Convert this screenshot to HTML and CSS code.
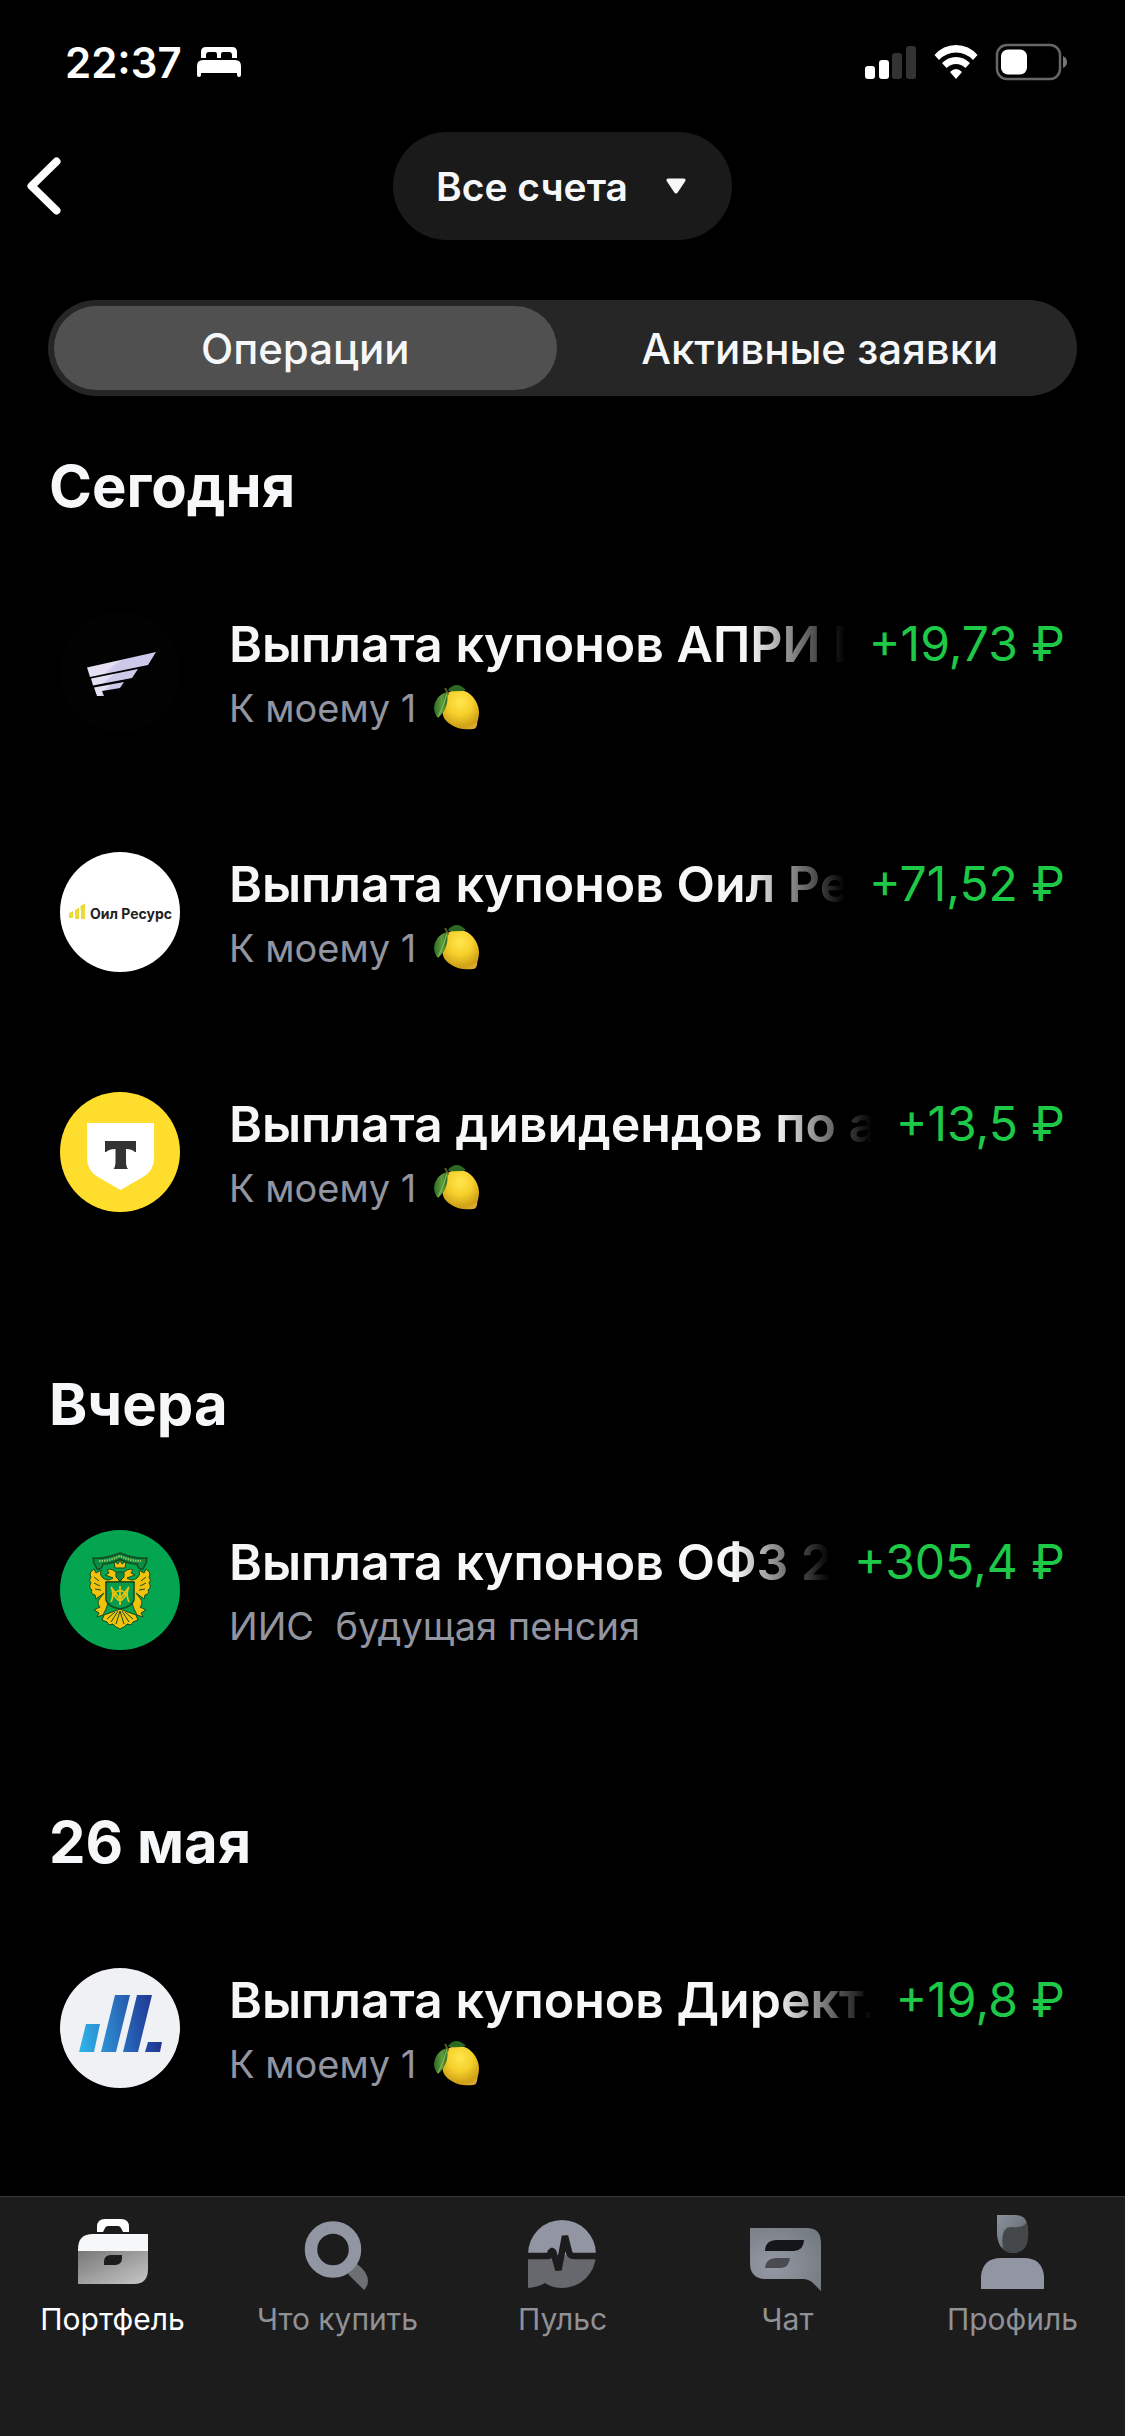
FILE: index.html
```html
<!DOCTYPE html>
<html lang="ru">
<head>
<meta charset="utf-8">
<meta name="viewport" content="width=device-width, initial-scale=1">
<title>Операции</title>
<link rel="stylesheet" href="styles.css">
</head>
<body>
<svg class="defs" aria-hidden="true">
  <defs>
    <radialGradient id="lemon-fill" cx=".48" cy=".3" r=".75">
      <stop offset="0" stop-color="#ffe64e"/><stop offset=".45" stop-color="#f6d02c"/><stop offset=".85" stop-color="#d0a116"/><stop offset="1" stop-color="#dca93a"/>
    </radialGradient>
    <linearGradient id="leaf-fill" x1="0" y1="0" x2="1" y2="0">
      <stop offset="0" stop-color="#2c6b2a"/><stop offset=".6" stop-color="#5f9c3c"/><stop offset="1" stop-color="#2f6a24"/>
    </linearGradient>
    <symbol id="lemon" viewBox="0 0 48 48">
      <path d="M14 10C18 5 28 5 34 8C42 13 46 21 46 29C46 34 44 37 44 41Q43 45 40 45C32 46 24 45 17 40C11 36 9 31 10 27C12 20 12 14 14 10Z" fill="url(#lemon-fill)"/>
      <path d="M12 4Q14 7 15 11" stroke="#5d5a24" stroke-width="2" fill="none"/>
      <path d="M15 6Q23-4 33 6Q25 8 16 7Z" fill="#2c6a22"/>
      <path d="M14 8C6 10 1 17 1 25Q2 31 5 34C12 28 16 19 14 8Z" fill="url(#leaf-fill)"/>
      <path d="M14 9Q11 22 5 33" stroke="#8fc25c" stroke-width="1" fill="none"/>
    </symbol>
  </defs>
</svg>

<header class="top">
  <div class="status">
    <div class="status-left">
      <time class="clock">22:37</time>
      <svg class="bed" viewBox="0 0 46 32" aria-label="Сон" role="img">
        <path d="M5 12V6Q5 1 10 1H36Q41 1 41 6V12H36V9Q36 6 33 6H27Q25 6 25 8V12H21V8Q21 6 19 6H13Q10 6 10 9V12Z" fill="#fff"/>
        <path d="M1 29V20Q1 14 7 14H39Q45 14 45 20V29Q45 31 43 31T41 29V27H5V29Q5 31 3 31T1 29Z" fill="#fff"/>
      </svg>
    </div>
    <div class="status-right">
      <svg class="signal" viewBox="0 0 52 36" role="img" aria-label="Сигнал">
        <rect x="0" y="22" width="10" height="13" rx="3" fill="#fff"/>
        <rect x="14" y="16" width="10" height="19" rx="3" fill="#fff"/>
        <rect x="27" y="9" width="10" height="26" rx="3" fill="#333"/>
        <rect x="41" y="2" width="10" height="33" rx="3" fill="#333"/>
      </svg>
      <svg class="wifi" viewBox="0 0 44 36" role="img" aria-label="Wi-Fi">
        <path d="M0.500 11Q9 1 22 1T43.500 11L39 16Q32 8.500 22 8.500T5 16Z" fill="#fff"/>
        <path d="M8 19Q14 13 22 13T36 19L31.500 24Q27 20 22 20T12.500 24Z" fill="#fff"/>
        <path d="M16 28Q19 25 22 25T28 28L22 35Z" fill="#fff"/>
      </svg>
      <svg class="battery" viewBox="0 0 74 38" role="img" aria-label="Батарея">
        <rect x="2" y="2" width="63" height="34" rx="10" fill="none" stroke="#666" stroke-width="2.500"/>
        <rect x="6" y="6.500" width="26" height="25" rx="7" fill="#fff"/>
        <path d="M68 13Q72 15 72 19T68 25Z" fill="#777"/>
      </svg>
    </div>
  </div>
  <div class="navbar">
    <button class="back" type="button" aria-label="Назад">
      <svg class="back-icon" viewBox="0 0 34 58" aria-hidden="true"><path d="M29.500 4.500L4.500 29L29.500 53.500" fill="none" stroke="#fff" stroke-width="8" stroke-linecap="round" stroke-linejoin="round"/></svg>
    </button>
    <button class="account" type="button">Все счета
      <svg class="caret" viewBox="0 0 20 16" aria-hidden="true"><path d="M2 0.500H18Q20.500 1 19 3.500L12 14Q10 17 8 14L1 3.500Q-0.500 1 2 0.500Z" fill="#f6f7f8"/></svg>
    </button>
  </div>
</header>

<div class="tabs" role="tablist">
  <button class="tab tab-active" type="button" role="tab" aria-selected="true">Операции</button>
  <button class="tab" type="button" role="tab" aria-selected="false">Активные заявки</button>
</div>

<main class="feed">
  <section class="day">
    <h2 class="day-title">Сегодня</h2>
    <ul class="ops">
      <li class="op">
        <svg class="logo" viewBox="0 0 120 120" aria-hidden="true">
          <defs><linearGradient id="wing" x1="0" y1="0" x2="1" y2=".4"><stop offset=".5" stop-color="#e6e0f4"/><stop offset=".55" stop-color="#cdc9ea"/></linearGradient></defs>
          <circle cx="60" cy="60" r="60" fill="#020203"/>
          <g fill="url(#wing)"><path d="M27 55.500L96 40L88 53L30 65Z"/><path d="M31 66.500L78 57L72 66L33 73.500Z"/><path d="M34 75.500L64 70L60 76L42 79L44 84H37Z"/></g>
        </svg>
        <div class="op-text">
          <div class="op-line"><span class="op-title">Выплата купонов АПРИ Б</span><span class="op-sum">+19,73 ₽</span></div>
          <div class="op-sub">К моему 1 <svg class="lemon" role="img" aria-label="лимон"><use href="#lemon"/></svg></div>
        </div>
      </li>
      <li class="op">
        <svg class="logo" viewBox="0 0 120 120" aria-hidden="true">
          <circle cx="60" cy="60" r="60" fill="#fff"/>
          <path d="M9 61L13 59V66H9ZM15 58L19 55.500V67H15ZM21 55L25 52V67H21ZM20.500 54L25 51.500V56L20.500 58Z" fill="#eadb36"/>
          <text class="oil-name" x="30" y="67">Оил Ресурс</text>
        </svg>
        <div class="op-text">
          <div class="op-line"><span class="op-title">Выплата купонов Оил Рес</span><span class="op-sum">+71,52 ₽</span></div>
          <div class="op-sub">К моему 1 <svg class="lemon" role="img" aria-label="лимон"><use href="#lemon"/></svg></div>
        </div>
      </li>
      <li class="op">
        <svg class="logo" viewBox="0 0 120 120" aria-hidden="true">
          <circle cx="60" cy="60" r="60" fill="#ffdd2d"/>
          <path d="M27 31H94V66Q94 79 83 85L60.500 98L38 85Q27 79 27 66Z" fill="#fff"/>
          <path d="M45 49H76V60H75Q72 57 66 57V69Q66 75 68 77H53.500Q55.500 75 55.500 69V57Q49 57 46 60H45Z" fill="#333"/>
        </svg>
        <div class="op-text">
          <div class="op-line"><span class="op-title">Выплата дивидендов по ак</span><span class="op-sum">+13,5 ₽</span></div>
          <div class="op-sub">К моему 1 <svg class="lemon" role="img" aria-label="лимон"><use href="#lemon"/></svg></div>
        </div>
      </li>
    </ul>
  </section>

  <section class="day">
    <h2 class="day-title">Вчера</h2>
    <ul class="ops">
      <li class="op">
        <svg class="logo" viewBox="0 0 120 120" aria-hidden="true">
          <circle cx="60" cy="60" r="60" fill="#04a551"/>
          <g stroke="#174a1c" stroke-linejoin="round">
            <path d="M33 28Q46 29 60 23Q74 29 87 28L86 33L83 39Q78 40 77 34Q68 34 60 29Q52 34 43 34Q42 40 37 39L34 33Z" fill="#0b8b43" stroke-width="1.500"/>
            <path d="M39 31Q50 31 60 26Q70 31 81 31" fill="none" stroke="#9cc75f" stroke-width="2" stroke-dasharray="1.500 1"/>
            <g fill="#f0c20c" stroke-width="1">
              <path id="wing-half" d="M59 45Q52 37 47 40L49 43L45 45L53 48Q48 52 43 48Q39 45 41 40L36 43L34 39Q28 43 31 47Q28 50 31 53Q28 57 32 60Q30 64 35 65L36 69L44 63L40 68Q36 73 40 77L34 80L39 83L37 87L43 85L46 79L48 73L46 52H59Z"/>
              <use href="#wing-half" transform="matrix(-1 0 0 1 120 0)"/>
              <path d="M55 38L54 31L58 34L60 30L62 34L66 31L65 38Z"/>
              <path d="M60 79L44 85L42 90L47 92L49 95L53 94L56 97L60 99L64 97L67 94L71 95L73 92L78 90L76 85Z"/>
            </g>
            <path d="M46 52H74V70Q72 77 60 79Q48 77 46 70Z" fill="#069c4b" stroke-width="1.500"/>
            <path d="M51 92Q55 86 58 81M56 94L60 81L64 94M69 92Q65 86 62 81M47 89L55 82M73 89L65 82M34 47L39 51M34 53L40 56M35 59L41 60M86 47L81 51M86 53L80 56M85 59L79 60" fill="none" stroke-width="1"/>
            <path d="M60 56V75M51 57Q55 63 51 72M69 57Q65 63 69 72M51 57L60 69L69 57M60 60Q49 64 60 71Q71 64 60 60" fill="none" stroke="#e5c315" stroke-width="1.800"/>
            <path d="M56 42H64V47L60 51L56 47Z" fill="#0b8b43" stroke-width="1"/>
          </g>
        </svg>
        <div class="op-text">
          <div class="op-line"><span class="op-title">Выплата купонов ОФЗ 26</span><span class="op-sum">+305,4 ₽</span></div>
          <div class="op-sub">ИИС&nbsp; будущая пенсия</div>
        </div>
      </li>
    </ul>
  </section>

  <section class="day">
    <h2 class="day-title">26 мая</h2>
    <ul class="ops">
      <li class="op">
        <svg class="logo" viewBox="0 0 120 120" aria-hidden="true">
          <defs><linearGradient id="bars" gradientUnits="userSpaceOnUse" x1="19" y1="84" x2="102" y2="72"><stop offset="0" stop-color="#2fb6ea"/><stop offset=".45" stop-color="#2b79c4"/><stop offset=".75" stop-color="#2450a8"/><stop offset="1" stop-color="#22348f"/></linearGradient></defs>
          <circle cx="60" cy="60" r="60" fill="#f0f1f4"/>
          <path d="M26 56H40L34 84H19ZM55 27H70L56 84H41ZM77 27H92L78 84H63ZM88 74H102L100 84H85Z" fill="url(#bars)"/>
        </svg>
        <div class="op-text">
          <div class="op-line"><span class="op-title">Выплата купонов ДиректЛ</span><span class="op-sum">+19,8 ₽</span></div>
          <div class="op-sub">К моему 1 <svg class="lemon" role="img" aria-label="лимон"><use href="#lemon"/></svg></div>
        </div>
      </li>
    </ul>
  </section>
</main>

<nav class="bottom">
  <a class="nav-item nav-current" href="#portfolio" aria-current="page">
    <svg class="nav-icon" viewBox="0 0 84 84" aria-hidden="true">
      <defs><linearGradient id="case" x1="0" y1="0" x2="1" y2="1"><stop offset="0" stop-color="#777"/><stop offset="1" stop-color="#c8c8c8"/></linearGradient></defs>
      <path d="M26 22V17Q26 9 34 9H50Q58 9 58 17V22H52L50 18Q49 16 47 16H37Q35 16 34 18L32 22Z" fill="#fff"/>
      <path d="M7 41V39Q7 24 22 24H77V41Z" fill="#f6f7f8"/>
      <path d="M7 41H77V59Q77 74 63 74H7Z" fill="url(#case)"/>
      <path d="M33 55V52Q33 45 40 45H51V48Q51 55 44 55Z" fill="#1c1c1d"/>
    </svg>
    Портфель
  </a>
  <a class="nav-item" href="#buy">
    <svg class="nav-icon" viewBox="0 0 84 84" aria-hidden="true">
      <path d="M61 54Q72 62 72 71Q72 76 68 80L52 64Z" fill="#6d7072"/>
      <circle cx="37" cy="39.500" r="22" fill="none" stroke="#9296a2" stroke-width="12.500"/>
    </svg>
    Что купить
  </a>
  <a class="nav-item" href="#pulse">
    <svg class="nav-icon" viewBox="0 0 84 84" aria-hidden="true">
      <path d="M7 44A34 34 0 0 1 75 44V45H7Z" fill="#9296a2"/>
      <path d="M7 45H75A34 34 0 0 1 41 78Q31 78 24 73Q18 77 7 78Z" fill="#66686d"/>
      <path d="M5 46H27Q29 46 30 41H32L37.500 60L44 26L48 42Q49 46 53 46H78" fill="none" stroke="#1c1c1d" stroke-width="6.500" stroke-linejoin="bevel"/>
    </svg>
    Пульс
  </a>
  <a class="nav-item" href="#chat">
    <svg class="nav-icon" viewBox="0 0 84 84" aria-hidden="true">
      <defs><radialGradient id="bubble" cx=".3" cy=".6" r=".8"><stop offset="0" stop-color="#9499a4"/><stop offset="1" stop-color="#757b82"/></radialGradient></defs>
      <path d="M4 18H61Q75 18 75 33V81L68 74Q63 69 57 69H20Q4 69 4 53Z" fill="url(#bubble)"/>
      <path d="M19 40Q20 30 30 30H58Q58 40 48 41H19Z" fill="#14161b"/>
      <path d="M19 58Q20 48 30 48H44Q43 58 34 58Z" fill="#494b51"/>
    </svg>
    Чат
  </a>
  <a class="nav-item" href="#profile">
    <svg class="nav-icon" viewBox="0 0 84 84" aria-hidden="true">
      <defs><linearGradient id="hair" x1="0" y1="0" x2="1" y2="1"><stop offset="0" stop-color="#8c929c"/><stop offset="1" stop-color="#5c6268"/></linearGradient></defs>
      <path d="M26 5H44Q55 5 56 14V28Q56 42 41 43Q27 41 26 24Z" fill="url(#hair)"/>
      <path d="M32 39Q29 17 40 17Q53 18 56 12Q58 20 57 28Q56 43 41 43Q35 42 32 39Z" fill="#45484a"/>
      <path d="M10 79V66Q12 48 30 48H53Q71 48 73 66V79Z" fill="#9296a2"/>
    </svg>
    Профиль
  </a>
</nav>
</body>
</html>
```
FILE: styles.css
```css
* {
  box-sizing: border-box;
}

body {
  margin: 0;
  min-height: 100vh;
  display: flex;
  flex-direction: column;
  background: #000;
  color: #f6f7f8;
  font-family: Inter, "Noto Sans", sans-serif;
}

button {
  border: 0;
  padding: 0;
  background: none;
  color: inherit;
  font-family: inherit;
}

svg {
  display: block;
}

.defs {
  position: absolute;
  width: 0;
  height: 0;
}

/* Status bar */
.status {
  display: flex;
  justify-content: space-between;
  align-items: center;
  height: 124px;
  padding: 0 56px 0 65px;
  color: #fff;
}

.status-left {
  display: flex;
  align-items: center;
  gap: 14px;
}

.clock {
  font-size: 42px;
  font-weight: 600;
}

.bed {
  width: 46px;
  height: 32px;
}

.status-right {
  display: flex;
  align-items: center;
  gap: 17px;
}

.signal {
  width: 52px;
  height: 36px;
}

.wifi {
  width: 44px;
  height: 36px;
}

.battery {
  width: 74px;
  height: 38px;
}

/* Navigation bar */
.navbar {
  display: grid;
  grid-template-columns: 1fr auto 1fr;
  align-items: center;
  padding: 8px 27px 60px;
}

.back {
  justify-self: start;
}

.back-icon {
  width: 34px;
  height: 58px;
}

.account {
  display: flex;
  align-items: center;
  gap: 38px;
  height: 108px;
  padding: 0 46px 0 43px;
  border-radius: 54px;
  background: #1a1a1a;
  font-size: 39px;
  font-weight: 600;
}

.caret {
  width: 20px;
  height: 16px;
}

/* Segmented control */
.tabs {
  display: grid;
  grid-template-columns: 1fr 1fr;
  gap: 12px;
  margin: 0 48px;
  padding: 6px;
  border-radius: 48px;
  background: #262626;
}

.tab {
  height: 84px;
  border-radius: 42px;
  font-size: 42px;
  font-weight: 500;
}

.tab-active {
  background: #505050;
}

/* Operations */
.feed {
  flex: 1;
}

.day + .day {
  margin-top: 42px;
}

.day-title {
  margin: 0;
  padding: 54px 49px 30px;
  font-size: 58px;
  line-height: 72px;
  font-weight: 700;
}

.ops {
  margin: 0;
  padding: 0;
  list-style: none;
}

.op {
  display: flex;
  align-items: flex-start;
  gap: 49px;
  padding: 60px 60px 52px;
}

.logo {
  flex: none;
  width: 120px;
  height: 120px;
}

.oil-name {
  fill: #222;
  font-size: 14px;
  font-weight: 700;
}

.op-text {
  flex: 1;
  min-width: 0;
}

.op-line {
  display: flex;
  gap: 24px;
  font-size: 50px;
  line-height: 64px;
}

.op-title {
  flex: 1;
  min-width: 0;
  overflow: hidden;
  white-space: nowrap;
  font-weight: 600;
  -webkit-mask-image: linear-gradient(to right, #000 calc(100% - 96px), transparent);
  mask-image: linear-gradient(to right, #000 calc(100% - 96px), transparent);
}

.op-sum {
  flex: none;
  color: #1dc946;
  font-size: 48px;
}

.op-sub {
  display: flex;
  align-items: center;
  gap: 17px;
  color: #9295a0;
  font-size: 38px;
  line-height: 64px;
}

.lemon {
  width: 48px;
  height: 48px;
}

/* Bottom navigation */
.bottom {
  display: grid;
  grid-template-columns: repeat(5, 1fr);
  height: 240px;
  border-top: 1px solid #3a3a3a;
  background: #1c1c1d;
}

.nav-item {
  display: flex;
  flex-direction: column;
  align-items: center;
  gap: 6px;
  padding-top: 13px;
  color: #909196;
  font-size: 30px;
  line-height: 38px;
  text-decoration: none;
}

.nav-current {
  color: #fff;
}

.nav-icon {
  width: 84px;
  height: 84px;
}
```
